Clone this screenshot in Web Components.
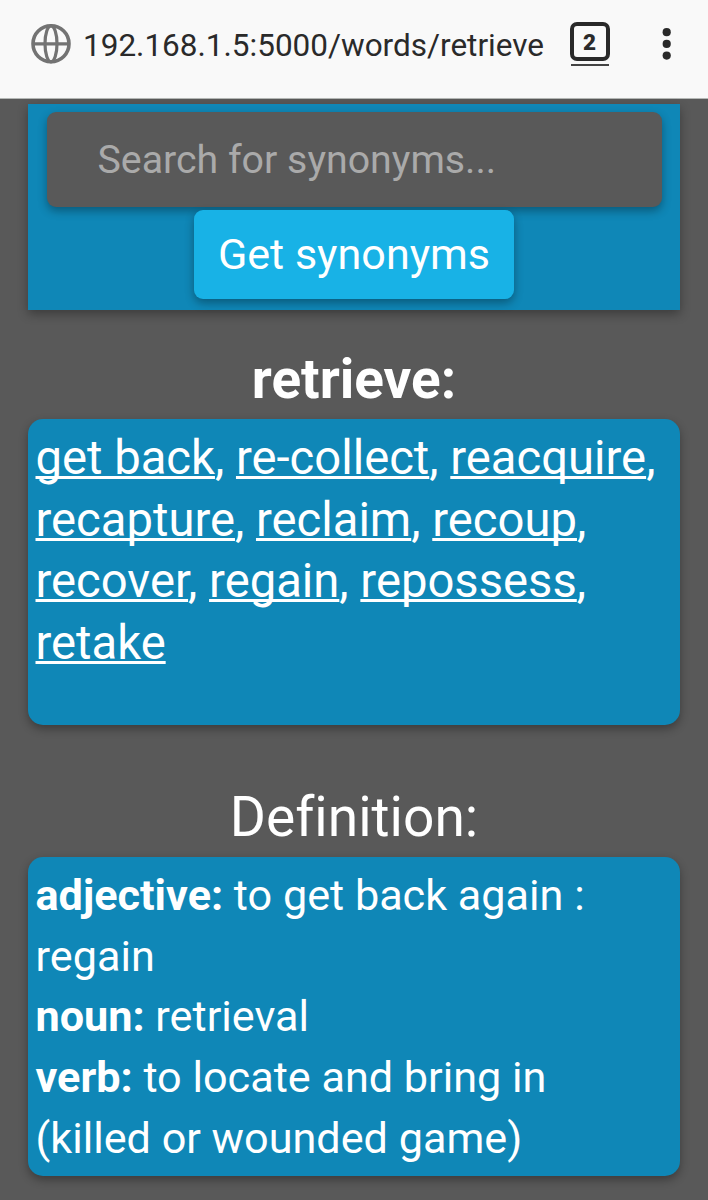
<!DOCTYPE html>
<html lang="en"><head><meta charset="utf-8"><title>retrieve</title>
<style>html,body{margin:0;background:#595959}body{height:1200px;overflow:hidden;font-family:Roboto,sans-serif;font-variant-ligatures:none;color:#fff}</style></head><body>
<word-app></word-app>
<script>
class Base extends HTMLElement{constructor(){super();this.attachShadow({mode:'open'}).innerHTML=this.constructor.html}}
class BrowserBar extends Base{static html=`<style>
:host{display:flex;height:99px;box-sizing:border-box;background:#f9f9f9;border-bottom:1px solid #b5b8b6;color:#2a2a2a;align-items:flex-start}
.globe{margin:24px 0 0 31px;flex:none}.url{font-size:31.5px;line-height:38px;margin:27px 0 0 12px;width:461px;white-space:nowrap;flex:none}
.tab{margin:22px 0 0 26px;width:40px;flex:none}.num{box-sizing:border-box;height:39px;border:4px solid #292929;border-radius:7px;font-weight:900;font-size:22.5px;line-height:33px;text-align:center;text-indent:-1px}
.line{height:2px;background:#444;margin:3px 1px 0}.dots{margin:27px 0 0 51px;flex:none}
</style><svg class="globe" width="40" height="40" viewBox="0 0 40 40" fill="none" stroke="#737373" stroke-width="3.6"><circle cx="20" cy="19.8" r="18"/><ellipse cx="20" cy="19.8" rx="6" ry="18" stroke-width="3.2"/><path d="M2 19.8h36" stroke-width="3.2"/></svg><span class="url"><slot></slot></span><div class="tab"><div class="num">2</div><div class="line"></div></div><svg class="dots" width="12" height="36" fill="#292929"><circle cx="5.7" cy="5.2" r="4.1"/><circle cx="5.7" cy="16.9" r="4.1"/><circle cx="5.7" cy="28.6" r="4.1"/></svg>`}
class SearchPanel extends Base{static html=`<style>
:host{display:flex;flex-direction:column;align-items:center;margin:5px 28px 0;height:206px;background:#0f87b7;box-shadow:0 4px 10px #0005}
.field{box-sizing:border-box;width:615px;height:95px;margin-top:8px;border-radius:9px;background:#595959;color:#aaa;padding-left:51px;font-size:39.3px;line-height:96px;box-shadow:0 4px 10px #0005}
button{margin:3px 0 0;padding:0;border:0;width:320px;height:89px;border-radius:9px;background:#18b2e6;color:#fff;font:43.1px Roboto,sans-serif;box-shadow:0 4px 10px #0005}
</style><div class="field">Search for synonyms...</div><button>Get synonyms</button>`}
class SectionTitle extends Base{static html=`<style>:host{display:block;text-align:center;font-size:55.1px;line-height:64px}:host([strong]){font-weight:700;font-size:54.9px}</style><slot></slot>`}
class InfoCard extends Base{static html=`<style>:host{display:block;box-sizing:border-box;margin:0 28px;padding:9px 7.5px;border-radius:15px;background:#0f87b7;box-shadow:0 4px 10px #0005}</style><slot></slot>`}
class WordApp extends Base{static html=`<style>
:host{display:block}section-title{padding-top:37px}.words{height:306px;margin-top:8px;font-size:47.2px;line-height:61.7px}.second{padding-top:60px}.defs{height:319px;margin-top:8px;font-size:43.2px;line-height:60.7px}u{text-decoration-thickness:3px;text-underline-offset:2px;text-decoration-skip-ink:none}span{white-space:nowrap}
</style><browser-bar>192.168.1.5:5000/words/retrieve</browser-bar><search-panel></search-panel>
<section-title strong>retrieve:</section-title><info-card class="words"><span><u>get back</u>, <u>re-collect</u>, <u>reacquire</u>,</span><br><span><u>recapture</u>, <u>reclaim</u>, <u>recoup</u>,</span><br><span><u>recover</u>, <u>regain</u>, <u>repossess</u>,</span><br><span><u>retake</u></span></info-card>
<section-title class="second">Definition:</section-title><info-card class="defs"><span><b>adjective:</b> to get back again :</span><br><span>regain</span><br><span><b>noun:</b> retrieval</span><br><span><b>verb:</b> to locate and bring in</span><br><span>(killed or wounded game)</span></info-card>`}
customElements.define('browser-bar',BrowserBar);customElements.define('search-panel',SearchPanel);customElements.define('section-title',SectionTitle);customElements.define('info-card',InfoCard);customElements.define('word-app',WordApp);
</script></body></html>
